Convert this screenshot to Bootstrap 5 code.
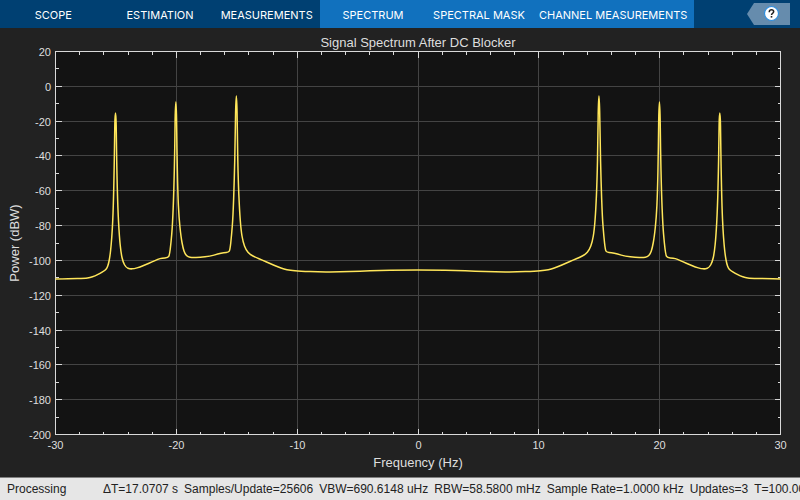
<!DOCTYPE html>
<html lang="en">
<head>
<meta charset="utf-8">
<meta name="viewport" content="width=device-width, initial-scale=1">
<title>Spectrum Analyzer</title>
<link href="https://cdn.jsdelivr.net/npm/bootstrap@5.3.0/dist/css/bootstrap.min.css" rel="stylesheet">
<style>
  body { background: #222; font-family: "Liberation Sans", Arial, sans-serif; }
  .toolstrip { background: #004072; height: 28px; }
  .base-tabs { flex: 0 0 40%; }
  .context-tabs { background: #1171be; }
  .tab-btn { border: 0; background: none; color: #fff; font: 400 11px/26px Inter, sans-serif; padding: 2px 7px 0; height: 28px; white-space: nowrap; }
  .base-tabs .tab-btn { flex: 1 1 0; }
  .context-tabs .tab-btn { min-width: 106px; }
  .help-btn { border: 0; background: none; height: 28px; margin-right: 10px; padding: 0; }
  .plot { min-height: 0; display: block; }
  .plot text { fill: #dedede; font-size: 11px; }
  .plot .caption-text { font-size: 13px; }
  .status-bar { background: #e6e6e6; border-top: 1px solid #808080; color: #222; font-size: 12px; line-height: 22px; height: 23px; padding-left: 7px; gap: 6px; }
  .run-state { flex: 0 0 90px; }
</style>
</head>
<body class="d-flex flex-column vh-100 overflow-hidden">
<header class="toolstrip d-flex flex-shrink-0">
  <nav class="base-tabs d-flex" aria-label="Scope tabs">
    <button class="tab-btn" type="button">SCOPE</button>
    <button class="tab-btn" type="button">ESTIMATION</button>
    <button class="tab-btn" type="button">MEASUREMENTS</button>
  </nav>
  <nav class="context-tabs d-flex" aria-label="Spectrum tabs">
    <button class="tab-btn" type="button">SPECTRUM</button>
    <button class="tab-btn" type="button">SPECTRAL MASK</button>
    <button class="tab-btn" type="button">CHANNEL MEASUREMENTS</button>
  </nav>
  <button class="help-btn ms-auto d-flex align-items-center" type="button" aria-label="Help">
    <svg width="43" height="22" viewBox="0 0 43 22" aria-hidden="true">
      <path d="M0 11 7 0H43V22H7Z" fill="#668cad"/>
      <circle cx="24.5" cy="10.5" r="7" fill="#fff" stroke="#2f8fdf" stroke-width="1.2"/>
      <path d="M22.3 9.2V8.6Q22.4 6.8 24.5 6.8T26.7 8.6Q26.7 9.6 25.6 10.3T24.5 12" fill="none" stroke="#222" stroke-width="1.5"/>
      <path d="M23.7 13H25.3V14.6H23.7Z" fill="#222"/>
    </svg>
  </button>
</header>
<main class="flex-grow-1 d-flex overflow-hidden">
  <svg class="plot w-100 h-100" viewBox="0 0 800 449" role="img" aria-label="Signal spectrum, power against frequency">
    <rect x="55" y="23" width="726" height="384" fill="#131313"/>
    <path id="grid" stroke="#444" fill="none" shape-rendering="crispEdges"/>
    <path id="axes" stroke="#d9d9d9" fill="none" shape-rendering="crispEdges"/>
    <path id="trace" stroke="#ffe65a" stroke-width="1.5" fill="none" stroke-linejoin="round"/>
    <g id="ylabels" text-anchor="end"></g>
    <g id="xlabels" text-anchor="middle"></g>
    <text class="caption-text" x="418" y="19" text-anchor="middle">Signal Spectrum After DC Blocker</text>
    <text class="caption-text" x="418" y="439" text-anchor="middle">Frequency (Hz)</text>
    <text class="caption-text" transform="translate(19 215) rotate(-90)" text-anchor="middle">Power (dBW)</text>
  </svg>
</main>
<footer class="status-bar d-flex flex-shrink-0 overflow-hidden text-nowrap">
  <span class="run-state">Processing</span>
  <span>ΔT=17.0707 s</span>
  <span>Samples/Update=25606</span>
  <span>VBW=690.6148 uHz</span>
  <span>RBW=58.5800 mHz</span>
  <span>Sample Rate=1.0000 kHz</span>
  <span>Updates=3</span>
  <span>T=100.0000</span>
</footer>
<script src="https://cdn.jsdelivr.net/npm/bootstrap@5.3.0/dist/js/bootstrap.bundle.min.js"></script>
<script>
  const left = 55.5, right = 780.5, top_ = 23.5, bottom = 406.5;
  const px = hz => Math.floor(left + (hz + 30) / 60 * (right - left)) + 0.5;
  const py = db => Math.floor(top_ + (20 - db) / 220 * (bottom - top_)) + 0.5;
  const byId = id => document.getElementById(id);
  function label(parent, x, y, value) {
    const t = document.createElementNS("http://www.w3.org/2000/svg", "text");
    t.setAttribute("x", x);
    t.setAttribute("y", y);
    t.textContent = value;
    byId(parent).append(t);
  }
  let grid = "", axes = `M${left} ${top_}H${right}V${bottom}H${left}Z`;
  for (let hz = -30; hz <= 30; hz += 2) {
    const major = hz % 10 === 0, n = major ? 6 : 3, x = px(hz);
    axes += `M${x} ${top_}v${n}M${x} ${bottom}v${-n}`;
    if (major) {
      if (Math.abs(hz) < 30) grid += `M${x} ${top_}V${bottom}`;
      label("xlabels", x, 421, hz);
    }
  }
  for (let db = -200; db <= 20; db += 10) {
    const major = db % 20 === 0, n = major ? 6 : 3, y = py(db);
    axes += `M${left} ${y}h${n}M${right} ${y}h${-n}`;
    if (major) {
      if (db > -200 && db < 20) grid += `M${left} ${y}H${right}`;
      label("ylabels", 51, y + 4, db);
    }
  }
  byId("grid").setAttribute("d", grid);
  byId("axes").setAttribute("d", axes);

  // Negative-frequency half of the spectrum; the other half is its mirror image.
  const half = [[55.5,251],[70,250.5],[85,250.3],[90,249.5],[95,248],[100,245.3],[105,242.3],[107,240],[108.5,236],[110,228],[111.2,217],
    [112.3,202],[113.3,180],[114.2,140],[114.6,110],[115,85],[116,85],[116.4,110],[116.8,140],[117.8,180],[119.3,208],[121,225],[123,234],[126,239.5],
    [130,241],[134,240.7],[140,239],[146,236.5],[152,234],[158,231.2],[162,230],[168,229.8],[169.5,227],[171,215],[172.5,197],
    [173.8,165],[174.8,120],[175.3,74],[176.4,74],[176.9,120],[177.8,165],[179,190],[181,209],[183,220],[185,226],[188,229],[192,229.7],[200,229.4],[210,228.2],
    [218,226],[224,224.7],[228.5,224.2],[230,222],[231.5,208],[233,189],[234.3,152],[235.2,112],[235.8,68],[236.9,68],[237.4,112],[238.2,152],
    [239.5,182],[241,202],[243,214],[246,222],[250,226.5],[256,229.5],[262,232],[270,235.5],[278,239],[284,241],[290,242.3],[300,243.2],
    [320,244],[340,243.8],[360,243.2],[380,242.4],[400,242]];
  const points = half.concat(half.map(([x, y]) => [835.3 - x, y]).reverse());
  points[points.length - 1][0] = right;
  let d = `M${points[0]}`;
  for (let i = 1; i < points.length - 1; i++) {
    const [a, b] = [points[i], points[i + 1]];
    d += `Q${a} ${(a[0] + b[0]) / 2},${(a[1] + b[1]) / 2}`;
  }
  byId("trace").setAttribute("d", d + `L${points[points.length - 1]}`);
</script>
</body>
</html>
